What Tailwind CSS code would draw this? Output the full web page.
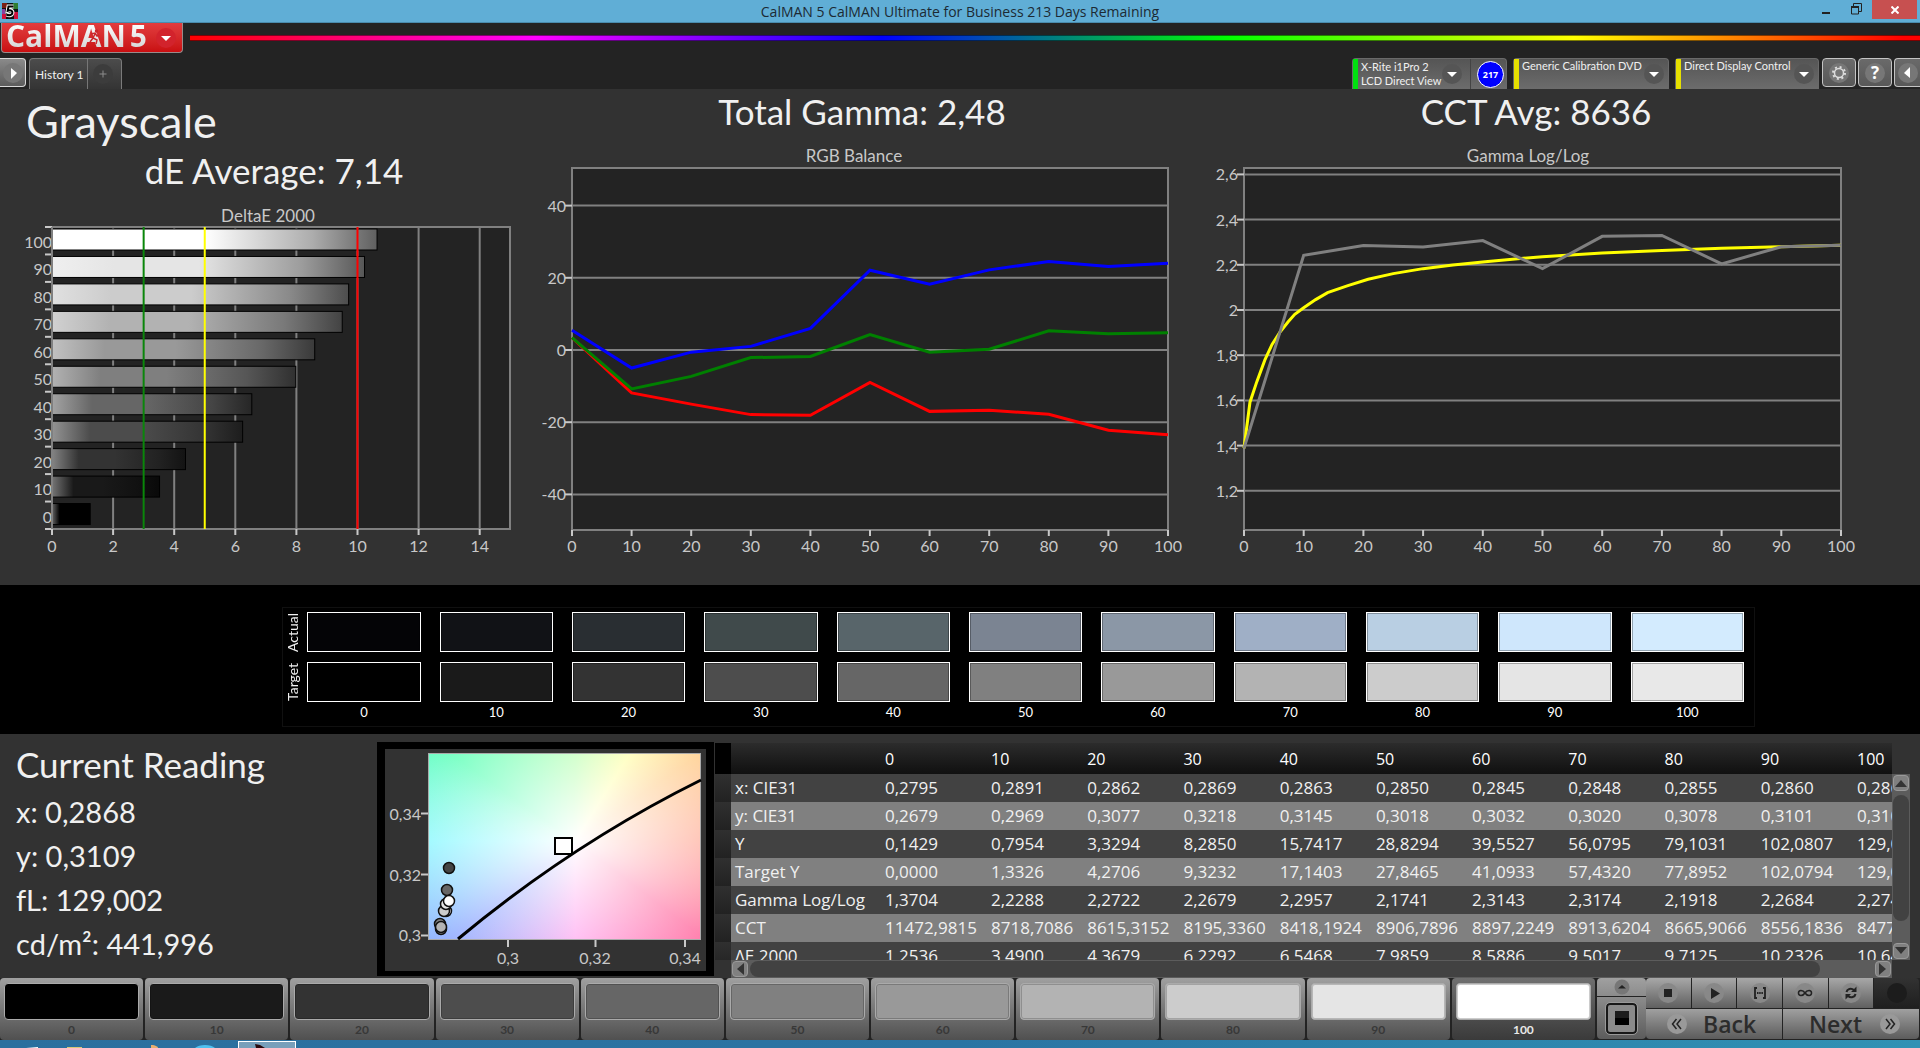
<!DOCTYPE html>
<html lang="en">
<head>
  <meta charset="UTF-8">
  <meta name="viewport" content="width=device-width, initial-scale=1.0">
  <title>CalMAN 5 CalMAN Ultimate for Business 213 Days Remaining</title>
  <script src="https://cdn.jsdelivr.net/npm/@tailwindcss/browser@4"></script>
</head>
<body class="bg-[#232323] font-['Lato','Open_Sans',sans-serif] text-[#f0f0f0] min-h-screen flex flex-col overflow-x-hidden">

  <!-- Window title bar -->
  <header class="h-[23px] bg-[#60aed6] border-b border-[#4a8cae] grid grid-cols-[1fr_auto_1fr] text-[#1c2a33]">
    <svg class="w-4 h-4 ml-0.5 mt-[3px]" viewBox="0 0 16 16">
      <rect width="16" height="16" fill="#111"/>
      <path d="M0 0h5v5H0z" fill="#7a1f14"/><path d="M11 0h5v6h-5z" fill="#2f7d32"/><path d="M0 6h3v5H0z" fill="#8a3fa0"/><path d="M0 11h4v5H0zM12 9h4v7h-4z" fill="#d0103c"/>
      <path d="M11.500 3.500H6.500L5.700 7.800c3-1 5-.2 4.700 2.200-.3 2-3 2.800-5.700 1.700" fill="none" stroke="#fff" stroke-width="4"/>
      <path d="M11.500 3.500H6.500L5.700 7.800c3-1 5-.2 4.700 2.200-.3 2-3 2.800-5.700 1.700" fill="none" stroke="#000" stroke-width="2"/>
    </svg>
    <h1 class="font-['Open_Sans',sans-serif] text-[14px] leading-6">CalMAN 5 CalMAN Ultimate for Business 213 Days Remaining</h1>
    <div class="flex justify-end pr-[3px]">
      <button aria-label="Minimize" class="w-6 h-5 mr-1 grid place-items-center"><svg class="w-3 h-3" viewBox="0 0 12 12"><path d="M2 9h8" stroke="#222" stroke-width="2"/></svg></button>
      <button aria-label="Restore" class="w-7 h-[18px] mr-0.5 grid place-items-center"><svg class="w-3 h-3" viewBox="0 0 12 12" fill="none" stroke="#222"><path d="M3.500 3V.5h8v8H9"/><path d="M1.500 4v7h7V4z"/><path d="M1 4h8" stroke-width="2"/></svg></button>
      <button aria-label="Close" class="w-[45px] h-[19px] bg-[#c75050] grid place-items-center"><svg class="w-2 h-2" viewBox="0 0 8 8"><path d="M.5.500l7 7M7.500.500l-7 7" stroke="#fff" stroke-width="2"/></svg></button>
    </div>
  </header>

  <!-- Logo and rainbow rule -->
  <div class="flex items-start h-[35px] pl-px">
    <button class="w-[182px] h-[30px] shrink-0 flex items-center justify-between pl-1 pr-1.5 rounded-b border border-t-0 border-[#9a8a8a] bg-linear-to-b from-[#e23c3e] to-[#c90d10]" aria-label="CalMAN menu">
      <span class="relative font-['Open_Sans',sans-serif] font-bold text-[30px] leading-[26px] pb-1 text-transparent bg-clip-text bg-linear-to-b from-white to-[#cfcfcf] whitespace-nowrap">CalMAN<span class="ml-1">5</span>
        <svg class="absolute left-[81px] top-[6px] w-4 h-4" viewBox="0 0 16 16" fill="none" stroke="#c9282c" stroke-width="1.500"><circle cx="9.500" cy="2" r="1"/><path d="M4 5l4-1 2 3 2-1M8 5L6 9l4 2-1 4M6 9l-3 4"/></svg>
      </span>
      <svg class="w-5 h-5 shrink-0" viewBox="0 0 20 20"><circle cx="10" cy="10" r="10" fill="#d2232c"/><path d="M5 8h10l-5 5z" fill="#fff"/></svg>
    </button>
    <div class="flex-1 h-1.5 mt-3 ml-[7px] border-y border-black/50 [background-image:linear-gradient(to_right,#f00,#f0f_20%,#00f_40%,#0f0_60%,#ff0_80%,#f00_99%)]"></div>
  </div>

  <!-- Tabs and device pickers -->
  <nav class="flex justify-between items-start h-[31px] text-[12px]">
    <div class="flex items-start">
      <button aria-label="Expand" class="w-[26px] h-[29px] grid place-items-center rounded-r border border-l-0 border-[#d8d8d8] bg-linear-to-b from-[#8a8a8a] to-[#5c5c5c]">
        <svg class="w-5 h-5" viewBox="0 0 20 20"><circle cx="10" cy="10" r="10" fill="#777"/><path d="M8 5l6 5-6 6z" fill="#fff"/></svg>
      </button>
      <div class="ml-[3px] h-[31px] flex rounded-t border border-b-0 border-[#7a7a7a] bg-linear-to-b from-[#4c4c4c] to-[#343434]">
        <a href="#history" class="px-[5px] w-[57px] leading-[31px] text-[12px] whitespace-nowrap">History 1</a>
        <button aria-label="Add tab" class="w-[34px] border-l border-[#777] grid place-items-center"><svg class="w-5 h-5 mr-1" viewBox="0 0 20 20"><circle cx="10" cy="10" r="10" fill="#3c3c3c"/><path d="M10 6.500v7M6.500 10h7" stroke="#8c8c8c"/></svg></button>
      </div>
    </div>
    <div class="flex items-start text-[11px] leading-[14px]">
      <div class="w-[155px] h-[31px] mr-1.5 flex rounded-t border border-b-0 border-[#6a6a6a] bg-linear-to-b from-[#555] to-[#6c6c6c]">
        <button class="flex-1 flex items-center text-left"><span class="w-[5px] self-stretch bg-[#00e010] mr-[3px]"></span><span class="flex-1 whitespace-nowrap">X-Rite i1Pro 2<br>LCD Direct View</span>
          <svg class="w-5 h-5 mr-2 shrink-0" viewBox="0 0 20 20"><circle cx="10" cy="10" r="10" fill="#555"/><path d="M5 8h10l-5 5z" fill="#fff"/></svg></button>
        <span class="w-9 pl-1 border-l border-[#444] grid place-items-center"><b class="w-[27px] h-[27px] rounded-full border border-white bg-[#0000ff] text-white text-[9px] leading-[25px] text-center font-['Open_Sans',sans-serif]">217</b></span>
      </div>
      <button class="w-[156px] h-[31px] mr-1.5 flex items-center text-left rounded-t border border-b-0 border-[#6a6a6a] bg-linear-to-b from-[#555] to-[#6c6c6c]"><span class="w-[5px] self-stretch bg-[#e6e000] mr-[3px]"></span><span class="flex-1 self-start whitespace-nowrap">Generic Calibration DVD</span>
        <svg class="w-5 h-5 mr-1 shrink-0" viewBox="0 0 20 20"><circle cx="10" cy="10" r="10" fill="#555"/><path d="M5 8h10l-5 5z" fill="#fff"/></svg></button>
      <button class="w-[144px] h-[31px] mr-[3px] flex items-center text-left rounded-t border border-b-0 border-[#6a6a6a] bg-linear-to-b from-[#555] to-[#6c6c6c]"><span class="w-[5px] self-stretch bg-[#e6e000] mr-[3px]"></span><span class="flex-1 self-start whitespace-nowrap">Direct Display Control</span>
        <svg class="w-5 h-5 mr-1 shrink-0" viewBox="0 0 20 20"><circle cx="10" cy="10" r="10" fill="#555"/><path d="M5 8h10l-5 5z" fill="#fff"/></svg></button>
      <button aria-label="Settings" class="w-[34px] h-[29px] mr-0.5 grid place-items-center rounded border border-[#c4c4c4] bg-linear-to-b from-[#6a6a6a] to-[#585858]">
        <svg class="w-5 h-5" viewBox="0 0 20 20"><circle cx="10" cy="10" r="10" fill="#777"/><circle cx="10" cy="10" r="4.500" fill="none" stroke="#ddd" stroke-width="1.500"/><circle cx="10" cy="10" r="6" fill="none" stroke="#ddd" stroke-width="2" stroke-dasharray="2 2.700"/></svg></button>
      <button aria-label="Help" class="w-[34px] h-[29px] mr-0.5 grid place-items-center rounded border border-[#c4c4c4] bg-linear-to-b from-[#6a6a6a] to-[#585858]"><span class="w-5 h-5 rounded-full bg-[#777] text-white font-bold text-[17px] leading-5 text-center font-['Open_Sans',sans-serif]">?</span></button>
      <button aria-label="Collapse" class="w-[26px] h-[29px] grid place-items-center rounded-l border border-r-0 border-[#c4c4c4] bg-linear-to-b from-[#6a6a6a] to-[#585858]">
        <svg class="w-5 h-5" viewBox="0 0 20 20"><circle cx="10" cy="10" r="10" fill="#777"/><path d="M12 4l-6 6 6 5z" fill="#fff"/></svg></button>
    </div>
  </nav>

  <main class="flex-1 flex flex-col">
    <!-- Charts -->
    <section class="bg-[#323232] grid grid-cols-[540fr_660fr_720fr] pb-5">
      <div class="pt-2">
        <h2 class="pl-[26px] text-[45px] leading-[48px]">Grayscale</h2>
        <p class="mt-[5px] pl-2 text-[35px] leading-10 text-center">dE Average: 7,14</p>
        <svg id="delta" class="w-full mt-[15px]" viewBox="0 205 540 360"></svg>
      </div>
      <div class="pt-0.5">
        <p class="pr-4 text-[35px] leading-10 text-center">Total Gamma: 2,48</p>
        <svg id="rgb" class="w-full mt-3.5" viewBox="540 145 660 420"></svg>
      </div>
      <div class="pt-0.5">
        <p class="pr-12 text-[35px] leading-10 text-center">CCT Avg: 8636</p>
        <svg id="gamma" class="w-full mt-3.5" viewBox="1200 145 720 420"></svg>
      </div>
    </section>

    <!-- Actual / target swatches -->
    <section class="bg-black pt-[22px] pb-[7px]">
      <div class="ml-[14.700%] mr-[8.600%] border border-[#101010] pt-1 pr-2.5 pb-1 flex">
        <div class="w-6 shrink-0 flex flex-col gap-2.5 text-[14px] leading-5">
          <span class="h-10 w-5 grid place-items-center [writing-mode:vertical-rl] rotate-180">Actual</span>
          <span class="h-10 w-5 grid place-items-center [writing-mode:vertical-rl] rotate-180">Target</span>
        </div>
        <div id="swatches" class="flex-1 grid grid-cols-11 gap-x-[19px]"></div>
      </div>
    </section>

    <!-- Current reading, chromaticity plot, data -->
    <section class="bg-[#323232] grid grid-cols-[376fr_339fr_1205fr] items-start pt-2">
      <div class="pl-4 pt-0.5">
        <h2 class="text-[35px] leading-10">Current Reading</h2>
        <div class="mt-1.5 text-[29px] leading-[44px]">
          <p>x: 0,2868</p>
          <p>y: 0,3109</p>
          <p>fL: 129,002</p>
          <p>cd/m²: 441,996</p>
        </div>
      </div>
      <svg class="w-full" viewBox="376 741 339 236" font-size="16" fill="#c8c8c8">
        <rect x="377" y="741" width="337" height="234" fill="#000"/>
        <rect x="385" y="748" width="321" height="222" fill="#323232"/>
        <foreignObject x="428" y="752" width="273" height="187">
          <div class="w-full h-full border border-[#aaa] [background-image:radial-gradient(ellipse_75%_75%_at_54%_47%,#fff,transparent),conic-gradient(from_0deg_at_54%_47%,#b8ffb0,#ffffa8_32deg,#ffd090_55deg,#ffa490_90deg,#ff78a8_127deg,#ffa8f0_180deg,#98b0ff_232deg,#80f8ff_270deg,#68ffbc_305deg,#b8ffb0)]"></div>
        </foreignObject>
        <path d="M458 938Q572 843 701 779" fill="none" stroke="#000" stroke-width="3"/>
        <rect x="555" y="837" width="17" height="16" fill="#fff" stroke="#000" stroke-width="2"/>
        <g stroke="#111" stroke-width="1.500">
          <circle cx="449" cy="867" r="5.500" fill="#444"/><circle cx="447" cy="889" r="5.500" fill="#666"/>
          <circle cx="446" cy="910" r="5.500" fill="#eee"/><circle cx="444" cy="910" r="5.500" fill="#ccc"/>
          <circle cx="446" cy="903" r="5.500" fill="#e5e5e5"/><circle cx="449" cy="900" r="5.500" fill="#fff"/>
          <circle cx="440" cy="923" r="5.500" fill="#808080"/><circle cx="441" cy="928" r="5.500" fill="#999"/><circle cx="441" cy="926" r="5.500" fill="#b3b3b3"/>
        </g>
        <path d="M421 812.500h7M421 873.500h7M421 934.500h7M508 939v7M595.500 939v7M685 939v7" stroke="#c8c8c8" stroke-width="2"/>
        <g text-anchor="end"><text x="421" y="819">0,34</text><text x="421" y="880">0,32</text><text x="421" y="940">0,3</text></g>
        <g text-anchor="middle"><text x="508" y="963">0,3</text><text x="595" y="963">0,32</text><text x="685" y="963">0,34</text></g>
      </svg>
      <div class="pt-px pr-2.5 grid grid-cols-[1fr_18px]">
        <div class="h-[217px] overflow-hidden font-['Open_Sans',sans-serif]">
          <table class="table-fixed w-full text-[17px]">
            <thead><tr id="head" class="h-[31px] text-left text-[16px] bg-linear-to-b from-[#2c2c2c] to-[#101010]"></tr></thead>
            <tbody id="rows"></tbody>
          </table>
        </div>
        <div class="mt-[31px] bg-[#5c5c5c] flex flex-col gap-1 p-px">
          <button aria-label="Scroll up" class="h-4 rounded bg-[#808080] border border-[#999] grid place-items-center"><svg class="w-3 h-2" viewBox="0 0 12 8"><path d="M0 8l6-7 6 7z" fill="#333"/></svg></button>
          <div class="h-[126px] rounded-lg bg-[#424242]"></div>
          <button aria-label="Scroll down" class="h-4 mt-auto rounded bg-[#808080] border border-[#999] grid place-items-center"><svg class="w-3 h-2" viewBox="0 0 12 8"><path d="M0 0l6 7 6-7z" fill="#333"/></svg></button>
        </div>
        <div class="ml-4 h-[18px] bg-[#5c5c5c] flex items-center gap-0.5 p-px">
          <button aria-label="Scroll left" class="w-4 h-4 shrink-0 rounded bg-[#808080] border border-[#999] grid place-items-center"><svg class="w-2 h-3" viewBox="0 0 8 12"><path d="M8 0L1 6l7 6z" fill="#333"/></svg></button>
          <div class="flex-1 mr-[53px] h-4 rounded-lg bg-[#424242]"></div>
          <button aria-label="Scroll right" class="w-4 h-4 shrink-0 rounded bg-[#808080] border border-[#999] grid place-items-center"><svg class="w-2 h-3" viewBox="0 0 8 12"><path d="M0 0l7 6-7 6z" fill="#333"/></svg></button>
        </div>
      </div>
    </section>

    <!-- Level picker and transport -->
    <section class="flex h-[62px] pb-px">
      <div id="levels" class="flex-1 grid grid-cols-11 gap-x-0.5"></div>
      <div class="w-[49px] ml-0.5 flex flex-col gap-px">
        <button aria-label="Show more" class="h-[18px] rounded-t bg-linear-to-b from-[#a0a0a0] to-[#8c8c8c] grid place-items-center"><svg class="w-4 h-4" viewBox="0 0 16 16"><circle cx="8" cy="8" r="7.500" fill="#777"/><path d="M4 9.500L8 6l4 3.500z" fill="#222"/></svg></button>
        <button aria-label="Pattern" class="flex-1 rounded-b bg-linear-to-b from-[#8c8c8c] to-[#5c5c5c] grid place-items-center"><span class="w-[31px] h-[31px] rounded border-2 border-[#181818] outline outline-[#999] bg-[#8a8a8a] grid place-items-center"><i class="w-3.5 h-3.5 bg-linear-to-b from-[#1c1c1c] from-50% to-black to-50%"></i></span></button>
      </div>
      <div class="w-[274px] pr-px grid grid-cols-6 grid-rows-[30px_30px] gap-px">
        <button aria-label="Stop" class="rounded-tl bg-linear-to-b from-[#a8a8a8] to-[#606060] grid place-items-center"><svg class="w-5 h-5" viewBox="0 0 20 20"><circle cx="10" cy="10" r="10" fill="#888"/><path d="M6 6h8v8H6z" fill="#222"/></svg></button>
        <button aria-label="Play" class="bg-linear-to-b from-[#a8a8a8] to-[#606060] grid place-items-center"><svg class="w-5 h-5" viewBox="0 0 20 20"><circle cx="10" cy="10" r="10" fill="#888"/><path d="M7 5l9 5.500L7 16z" fill="#222"/></svg></button>
        <button aria-label="Read series" class="bg-linear-to-b from-[#a8a8a8] to-[#606060] grid place-items-center"><svg class="w-5 h-5" viewBox="0 0 20 20"><circle cx="10" cy="10" r="10" fill="#888"/><path d="M7 5H5v10h2M13 5h2v10h-2" fill="none" stroke="#222" stroke-width="1.800"/><path d="M7 10h6" stroke="#222" stroke-width="2" stroke-dasharray="1.500 .7"/></svg></button>
        <button aria-label="Continuous" class="bg-linear-to-b from-[#a8a8a8] to-[#606060] grid place-items-center"><svg class="w-5 h-5" viewBox="0 0 20 20"><circle cx="10" cy="10" r="10" fill="#888"/><path d="M10 10C8 7 3.500 6.500 3.500 10S8 13 10 10s6.500-3.500 6.500 0S12 13 10 10z" fill="none" stroke="#222" stroke-width="1.600"/></svg></button>
        <button aria-label="Refresh" class="bg-linear-to-b from-[#a8a8a8] to-[#606060] grid place-items-center"><svg class="w-5 h-5" viewBox="0 0 20 20"><circle cx="10" cy="10" r="10" fill="#888"/><path d="M5.500 9C6 6 10 4.500 13 7M14.500 11c-.5 3-4.500 4.500-7.500 2" fill="none" stroke="#222" stroke-width="2"/><path d="M15.500 3.500V9H10zM4.500 16.500V11H10z" fill="#222"/></svg></button>
        <button aria-label="Record" class="rounded-tr bg-linear-to-b from-[#323232] to-[#1f1f1f] grid place-items-center"><span class="w-5 h-5 rounded-full bg-[#1c1c1c]"></span></button>
        <button class="col-span-3 rounded-bl bg-linear-to-b from-[#a0a0a0] to-[#5c5c5c] flex items-center gap-4 pl-[21px] text-[#2c2c2c] font-['Open_Sans',sans-serif] font-semibold text-[23px] leading-7"><svg class="w-5 h-5" viewBox="0 0 20 20"><circle cx="10" cy="10" r="10" fill="#999"/><path d="M9.500 5l-4 5 4 5M14 5l-4 5 4 5" fill="none" stroke="#222" stroke-width="1.500"/></svg>Back</button>
        <button class="col-span-3 rounded-br bg-linear-to-b from-[#a0a0a0] to-[#5c5c5c] flex items-center justify-end gap-[18px] pr-[19px] text-[#2c2c2c] font-['Open_Sans',sans-serif] font-semibold text-[23px] leading-7">Next<svg class="w-5 h-5" viewBox="0 0 20 20"><circle cx="10" cy="10" r="10" fill="#999"/><path d="M6 5l4 5-4 5M10.500 5l4 5-4 5" fill="none" stroke="#222" stroke-width="1.500"/></svg></button>
      </div>
    </section>
  </main>

  <!-- Top edge of the desktop taskbar -->
  <footer class="h-2 overflow-hidden bg-linear-to-r from-[#2a6f9e] via-[#2a74a3] to-[#3092b4]">
    <svg class="h-2 w-[300px]" viewBox="0 0 300 8">
      <path d="M26 8l12-1v1z" fill="#fff"/><path d="M67 7h15v1H67z" fill="#d8c878"/><path d="M151 5c5 0 7 2 7 3h-7z" fill="#e8b070"/><path d="M195 8c4-4 16-4 20 0z" fill="#4fc0f0"/>
      <rect x="238.500" y="1.500" width="57" height="8" fill="#789fba" stroke="#fff"/><path d="M255 4l5 1 5 3h-9z" fill="#2a0a0e"/>
    </svg>
  </footer>

<script>
  const el = id => document.getElementById(id);
  const levels = [0,10,20,30,40,50,60,70,80,90,100];
  const grays = ['#000000','#1a1a1a','#333333','#4d4d4d','#666666','#808080','#999999','#b3b3b3','#cccccc','#e5e5e5','#ffffff'];
  const GRID = '#808080', TICK = '#c8c8c8', PLOT = '#232323';

  const line = (x1,y1,x2,y2,c,w=2) => `<line x1="${x1}" y1="${y1}" x2="${x2}" y2="${y2}" stroke="${c}" stroke-width="${w}"/>`;
  const text = (x,y,s,a='middle',size=16) => `<text x="${x}" y="${y}" text-anchor="${a}" font-size="${size}" fill="${TICK}">${s}</text>`;
  const poly = (pts,c) => `<polyline points="${pts.map(p=>p.join()).join(' ')}" fill="none" stroke="${c}" stroke-width="3"/>`;
  const box = (x,y,w,h,fill) => `<rect x="${x}" y="${y}" width="${w}" height="${h}" fill="${fill}" stroke="${GRID}" stroke-width="2"/>`;

  /* DeltaE bars */
  function drawDelta(){
    const de=[1.25,3.52,4.37,6.24,6.54,7.98,8.6,9.5,9.71,10.23,10.64];
    const L=52,T=227,B=529,u=30.55,row=(B-T)/11;
    let s=text(268,222,'DeltaE 2000','middle',17)+box(L,T,458,B-T,PLOT), defs='';
    for(let v=0;v<=14;v+=2){
      const x=L+v*u;
      if(v) s+=line(x,T,x,B,GRID);
      s+=line(x,B,x,B+6,TICK)+text(x,552,v);
    }
    levels.forEach((lv,i)=>{
      const c=i*25.5, g=n=>`rgb(${n|0},${n|0},${n|0})`, y=B-(i+1)*row;
      defs+=`<linearGradient id="g${i}"><stop offset="0" stop-color="${g(c+(255-c)*.4)}"/><stop offset=".2" stop-color="${g(c)}"/><stop offset=".47" stop-color="${g(c)}"/><stop offset=".8" stop-color="${g(c*.68)}"/><stop offset="1" stop-color="${g(c*.38)}"/></linearGradient>`;
      s+=`<rect x="${L}" y="${y+2}" width="${de[i]*u}" height="21" fill="url(#g${i})" stroke="#000"/>`;
      s+=line(L-7,y,L,y,TICK)+text(L,y+21,lv,'end');
    });
    s+=line(L-7,B,L,B,TICK)+line(L,T,L,B,GRID);
    s+=line(L+3*u,T,L+3*u,B,'#0a860a')+line(L+5*u,T,L+5*u,B,'#ffff00')+line(L+10*u,T,L+10*u,B,'#ff0000');
    el('delta').innerHTML=`<defs>${defs}</defs>`+s;
  }

  /* Line charts share the axis code */
  function drawLines(id,title,o){
    const {L,R,T,B}=o, X=v=>L+v*(R-L)/100, Y=v=>o.y0-(v-o.v0)*o.k;
    let s=text(o.cx,162,title,'middle',17)+box(L,T,R-L,B-T,PLOT);
    o.ticks.forEach(v=>{s+=line(L,Y(v),R,Y(v),GRID)+line(L-7,Y(v),L,Y(v),TICK)+text(L-6,Y(v)+6,String(v).replace('.',','),'end');});
    levels.forEach(v=>{s+=line(X(v),B,X(v),B+6,TICK)+text(X(v),552,v);});
    o.series.forEach(([c,pts])=>{s+=poly(pts.map(([a,b])=>[X(a),Y(b)]),c);});
    el(id).innerHTML=s;
  }
  const zip = ys => ys.map((y,i)=>[levels[i],y]);

  drawDelta();
  drawLines('rgb','RGB Balance',{L:572,R:1168,T:168,B:530,cx:854,y0:350,v0:0,k:3.61,ticks:[40,20,0,-20,-40],series:[
    ['#ff0000',zip([3.4,-11.9,-15,-17.9,-18.1,-9,-17,-16.7,-17.8,-22.2,-23.5])],
    ['#008000',zip([3.4,-10.8,-7.3,-2.1,-1.8,4.3,-.6,.2,5.3,4.5,4.8])],
    ['#0000ff',zip([5.5,-5,-.6,1,6,22.1,18.2,22.2,24.5,23.1,24])]
  ]});
  drawLines('gamma','Gamma Log/Log',{L:1244,R:1841,T:168,B:530,cx:1528,y0:310,v0:2,k:226,ticks:[2.6,2.4,2.2,2,1.8,1.6,1.4,1.2],series:[
    ['#ffff00',[[0,1.388],[1,1.592],[2.15,1.683],[3.5,1.779],[4.7,1.848],[6,1.901],[7.4,1.948],[8.5,1.981],[10,2.01],[12,2.046],[14,2.077],[17.4,2.108],[20.8,2.136],[25,2.161],[30,2.183],[35,2.199],[40.4,2.214],[50,2.236],[60,2.252],[70,2.263],[80,2.273],[90,2.28],[100,2.286]]],
    ['#808080',zip([1.388,2.242,2.285,2.279,2.307,2.183,2.326,2.33,2.204,2.28,2.286])]
  ]});

  /* Swatches */
  const actual=['#040406','#111216','#292e32','#404a4b','#58656a','#7b8492','#8b97a6','#9fafc6','#b9cfe3','#cfe7fc','#d3ebfe'];
  el('swatches').innerHTML=levels.map((v,i)=>`<div class="text-center text-[13px] leading-5 text-white">
    <div class="h-10 border border-white inset-ring inset-ring-black/30" style="background-color:${actual[i]}"></div>
    <div class="h-10 mt-2.5 border border-white inset-ring inset-ring-black/30" style="background-color:${i===10?'#e8e8e8':grays[i]}"></div>${v}</div>`).join('');

  /* Data table */
  const data=[
    ['x: CIE31','0,2795','0,2891','0,2862','0,2869','0,2863','0,2850','0,2845','0,2848','0,2855','0,2860','0,2868'],
    ['y: CIE31','0,2679','0,2969','0,3077','0,3218','0,3145','0,3018','0,3032','0,3020','0,3078','0,3101','0,3109'],
    ['Y','0,1429','0,7954','3,3294','8,2850','15,7417','28,8294','39,5527','56,0795','79,1031','102,0807','129,0020'],
    ['Target Y','0,0000','1,3326','4,2706','9,3232','17,1403','27,8465','41,0933','57,4320','77,8952','102,0794','129,0020'],
    ['Gamma Log/Log','1,3704','2,2288','2,2722','2,2679','2,2957','2,1741','2,3143','2,3174','2,1918','2,2684','2,2740'],
    ['CCT','11472,9815','8718,7086','8615,3152','8195,3360','8418,1924','8906,7896','8897,2249','8913,6204','8665,9066','8556,1836','8477,1020'],
    ['ΔE 2000','1,2536','3,4900','4,3679','6,2292','6,5468','7,9859','8,5886','9,5017','9,7125','10,2326','10,6400']
  ];
  el('head').innerHTML='<th class="w-4 bg-black"></th><th class="w-[150px]"></th>'+levels.map((v,i)=>`<th class="pl-1 font-normal text-white ${i===0?'w-[106px]':i===10?'w-[39px]':''}">${v}</th>`).join('');
  el('rows').innerHTML=data.map((r,i)=>`<tr class="h-7 whitespace-nowrap ${i%2?'bg-[#808080]':'bg-[#424242]'}"><td class="bg-linear-to-b from-[#303030] to-[#222]"></td>${r.map((c,j)=>j?`<td class="pl-1 leading-7 overflow-hidden">${c}</td>`:`<th class="pl-1 leading-7 font-normal text-left">${c}</th>`).join('')}</tr>`).join('');

  /* Level picker */
  el('levels').innerHTML=levels.map((v,i)=>`<button class="flex flex-col px-1 pt-[5px] rounded text-[12px] leading-5 ${i===10?'bg-linear-to-b from-[#707070] to-[#3a3a3a] text-[#e8e8e8] font-bold':'bg-linear-to-b from-[#a0a0a0] to-[#505050] text-[#383838] font-bold'}">
    <span class="h-[37px] w-full rounded border border-[#aaa] inset-ring inset-ring-black/20" style="background-color:${grays[i]}"></span><span class="w-full text-center">${v}</span></button>`).join('');
</script>
</body>
</html>
